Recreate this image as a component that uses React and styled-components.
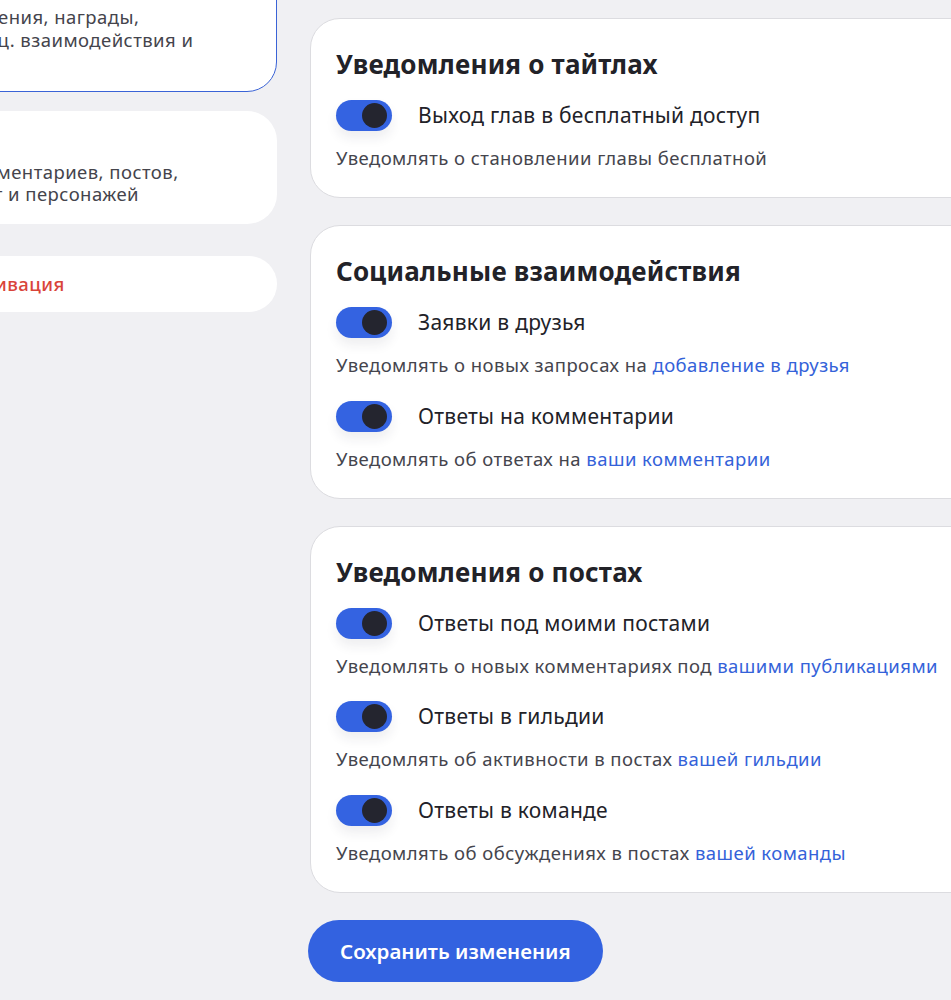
import React from 'react';
import styled, { createGlobalStyle } from 'styled-components';

const GlobalStyle = createGlobalStyle`
  html, body {
    margin: 0;
    padding: 0;
    background: #f0f0f3;
    overflow: hidden;
  }
  body {
    font-family: "Noto Sans", "Open Sans", sans-serif;
    color: #24242b;
  }
`;

const Page = styled.div`
  display: flex;
  align-items: flex-start;
  gap: 33px;
  margin-left: -171px;
  margin-top: -44px;
`;

const Sidebar = styled.div`
  width: 448px;
  flex-shrink: 0;
  display: flex;
  flex-direction: column;
  gap: 19px;
`;

const NavCard = styled.div`
  background: #fff;
  border: 1.5px solid ${p => (p.active ? '#3a63d6' : 'transparent')};
  border-radius: 30px;
  padding: 16px 22px 17px;
  white-space: nowrap;
`;

const NavTitle = styled.div`
  font-size: 19px;
  font-weight: 700;
  line-height: 22px;
  margin-bottom: 11px;
`;

const NavText = styled.div`
  font-size: 18.5px;
  letter-spacing: 0.45px;
  line-height: 22.5px;
  color: #44444c;
`;

const DangerCard = styled.div`
  margin-top: 13px;
  background: #fff;
  border-radius: 28px;
  height: 56px;
  display: flex;
  align-items: center;
  padding-left: 110px;
  font-size: 18.5px;
  letter-spacing: 0.45px;
  font-weight: 500;
  color: #d9443a;
`;

const Main = styled.div`
  width: 680px;
  flex-shrink: 0;
  padding-top: 62px;
  display: flex;
  flex-direction: column;
  align-items: flex-start;
  gap: 27px;
`;

const Card = styled.section`
  align-self: stretch;
  background: #fff;
  border: 1.5px solid #dcdce0;
  border-radius: 30px;
  padding: 30px 26px 28px 25px;
  display: flex;
  flex-direction: column;
`;

const CardTitle = styled.h2`
  margin: 0 0 21px;
  font-size: 26px;
  letter-spacing: 0.2px;
  line-height: 30px;
  font-weight: 700;
  color: #222228;
`;

const Items = styled.div`
  display: flex;
  flex-direction: column;
  gap: 24.5px;
`;

const Item = styled.div`
  display: flex;
  flex-direction: column;
  gap: 16px;
`;

const ToggleRow = styled.label`
  display: flex;
  align-items: center;
  gap: 26px;
  font-size: 21px;
  letter-spacing: 0.27px;
  line-height: 31px;
  color: #222228;
`;

const Switch = styled.span`
  position: relative;
  width: 56px;
  height: 31px;
  border-radius: 16px;
  background: ${p => (p.on ? '#3463e1' : '#c9cad0')};
  box-shadow: 0 7px 12px rgba(40, 44, 60, 0.08);
  flex-shrink: 0;
`;

const Knob = styled.span`
  position: absolute;
  top: 3px;
  left: ${p => (p.on ? '26px' : '4px')};
  width: 25px;
  height: 25px;
  border-radius: 50%;
  background: #24252f;
`;

const Desc = styled.p`
  margin: 0;
  font-size: 18.5px;
  letter-spacing: 0.45px;
  line-height: 22px;
  color: #45454d;
  white-space: nowrap;
`;

const Link = styled.a`
  color: #3462d9;
  text-decoration: none;
`;

const SaveButton = styled.button`
  margin-left: -2px;
  height: 62px;
  padding: 0 32px;
  border: none;
  border-radius: 31px;
  background: #3362e0;
  color: #fff;
  font-family: inherit;
  font-size: 20.5px;
  font-weight: 600;
  cursor: pointer;
`;

const sections = [
  {
    title: 'Уведомления о тайтлах',
    items: [
      { label: 'Выход глав в бесплатный доступ', text: 'Уведомлять о становлении главы бесплатной' },
    ],
  },
  {
    title: 'Социальные взаимодействия',
    items: [
      { label: 'Заявки в друзья', text: 'Уведомлять о новых запросах на ', link: 'добавление в друзья' },
      { label: 'Ответы на комментарии', text: 'Уведомлять об ответах на ', link: 'ваши комментарии' },
    ],
  },
  {
    title: 'Уведомления о постах',
    items: [
      { label: 'Ответы под моими постами', text: 'Уведомлять о новых комментариях под ', link: 'вашими публикациями' },
      { label: 'Ответы в гильдии', text: 'Уведомлять об активности в постах ', link: 'вашей гильдии' },
      { label: 'Ответы в команде', text: 'Уведомлять об обсуждениях в постах ', link: 'вашей команды' },
    ],
  },
];

const Toggle = ({ on }) => (
  <Switch on={on ? 1 : 0}>
    <Knob on={on ? 1 : 0} />
  </Switch>
);

export default function App() {
  return (
    <>
      <GlobalStyle />
      <Page>
        <Sidebar>
          <NavCard active>
            <NavTitle>Уведомления</NavTitle>
            <NavText>
              Тайтлы, обновления, награды,<br />
              обсуждения, соц. взаимодействия и<br />
              другое
            </NavText>
          </NavCard>
          <NavCard>
            <NavTitle>Приватность</NavTitle>
            <NavText>
              Видимость комментариев, постов,<br />
              закладок, работ и персонажей
            </NavText>
          </NavCard>
          <DangerCard>Деактивация</DangerCard>
        </Sidebar>
        <Main>
          {sections.map(s => (
            <Card key={s.title}>
              <CardTitle>{s.title}</CardTitle>
              <Items>
                {s.items.map(it => (
                  <Item key={it.label}>
                    <ToggleRow>
                      <Toggle on />
                      {it.label}
                    </ToggleRow>
                    <Desc>
                      {it.text}
                      {it.link && <Link href="#">{it.link}</Link>}
                    </Desc>
                  </Item>
                ))}
              </Items>
            </Card>
          ))}
          <SaveButton>Сохранить изменения</SaveButton>
        </Main>
      </Page>
    </>
  );
}
